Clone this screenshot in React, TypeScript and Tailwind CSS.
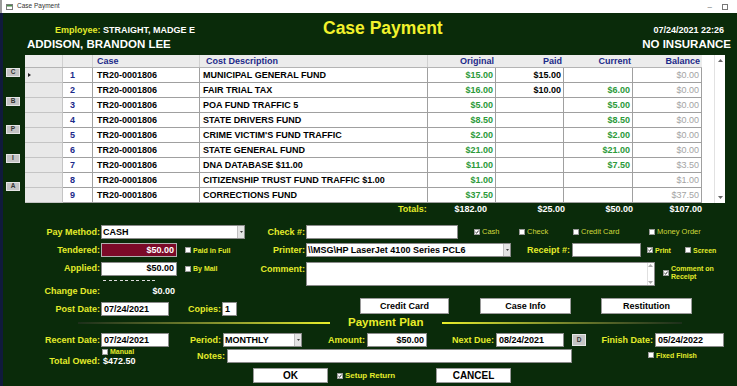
import React from "react"

type Row = {
  n: number
  desc: string
  orig: string
  paid: string
  cur: string
  bal: string
}

const rows: Row[] = [
  { n: 1, desc: "MUNICIPAL GENERAL FUND", orig: "$15.00", paid: "$15.00", cur: "", bal: "$0.00" },
  { n: 2, desc: "FAIR TRIAL TAX", orig: "$16.00", paid: "$10.00", cur: "$6.00", bal: "$0.00" },
  { n: 3, desc: "POA FUND TRAFFIC 5", orig: "$5.00", paid: "", cur: "$5.00", bal: "$0.00" },
  { n: 4, desc: "STATE DRIVERS FUND", orig: "$8.50", paid: "", cur: "$8.50", bal: "$0.00" },
  { n: 5, desc: "CRIME VICTIM'S FUND TRAFFIC", orig: "$2.00", paid: "", cur: "$2.00", bal: "$0.00" },
  { n: 6, desc: "STATE GENERAL FUND", orig: "$21.00", paid: "", cur: "$21.00", bal: "$0.00" },
  { n: 7, desc: "DNA DATABASE $11.00", orig: "$11.00", paid: "", cur: "$7.50", bal: "$3.50" },
  { n: 8, desc: "CITIZENSHIP TRUST FUND TRAFFIC $1.00", orig: "$1.00", paid: "", cur: "", bal: "$1.00" },
  { n: 9, desc: "CORRECTIONS FUND", orig: "$37.50", paid: "", cur: "", bal: "$37.50" },
]

const label =
  "flex h-[14px] items-center justify-end pr-[1px] text-[9px] font-bold leading-none text-[#e3ec2a] whitespace-nowrap"
const input =
  "flex h-[14px] items-center border border-[#8a8a8a] bg-white px-[2px] text-[9px] font-bold leading-none text-black whitespace-nowrap"
const button =
  "flex items-center justify-center border border-[#9a9a9a] bg-white text-[9px] font-bold leading-none text-black"

const Box = ({ checked }: { checked?: boolean }) => (
  <span className="flex h-[6px] w-[6px] shrink-0 items-center justify-center border border-[#9a9a9a] bg-white">
    {checked && (
      <svg viewBox="0 0 4 4" className="h-[4px] w-[4px]">
        <path d="M0.4 2 L1.6 3.2 L3.6 0.6" fill="none" stroke="#1a1a1a" strokeWidth="0.9" />
      </svg>
    )}
  </span>
)

const Check = ({
  text,
  checked,
  className = "",
  light,
}: {
  text: string
  checked?: boolean
  className?: string
  light?: boolean
}) => (
  <div className={`flex items-center gap-[2px] ${className}`}>
    <Box checked={checked} />
    <span
      className={
        light
          ? "text-[7.5px] leading-none text-[#cfd83a] whitespace-nowrap"
          : "text-[7px] font-bold leading-none text-[#e3ec2a] whitespace-nowrap"
      }
    >
      {text}
    </span>
  </div>
)

const Select = ({ value, className = "" }: { value: string; className?: string }) => (
  <div className={`flex h-[14px] border border-[#8a8a8a] bg-white ${className}`}>
    <span className="flex flex-1 items-center overflow-hidden pl-[1px] text-[9px] font-bold leading-none whitespace-nowrap">
      {value}
    </span>
    <span className="flex w-[7px] items-center justify-center border-l border-[#c0c0c0] bg-[#e4e4e4]">
      <svg width="3" height="2" viewBox="0 0 3 2">
        <path d="M0 0H3L1.5 2Z" fill="#444" />
      </svg>
    </span>
  </div>
)

const SideButton = ({ letter }: { letter: string }) => (
  <div className="flex h-[9px] w-[14px] items-center justify-center border border-[#e6e6e6] bg-[#c4c4c4] text-[6.5px] font-bold leading-none text-[#333]">
    {letter}
  </div>
)

const TitleBar = () => (
  <div className="flex h-[13px] items-center border-l-2 border-[#9a9a9a] bg-white">
    <svg width="7" height="6" viewBox="0 0 7 6" className="ml-[4px]">
      <rect x="0.5" y="0.5" width="6" height="5" fill="#fff" stroke="#7a7a7a" />
      <rect x="1" y="1" width="5" height="1.5" fill="#4a8a4a" />
    </svg>
    <span className="ml-[4px] text-[6.5px] leading-none text-[#333]">Case Payment</span>
    <span className="ml-auto text-[8px] leading-none text-[#666]">–</span>
    <span className="mr-[9px] ml-[10px] h-[6px] w-[6px] border border-[#777]" />
  </div>
)

const Table = () => (
  <div className="flex h-[148px]">
    <div className="flex w-[22px] flex-col gap-[19.5px] pt-[13px] pl-[3px]">
      {["C", "B", "P", "I", "A"].map((l) => (
        <SideButton key={l} letter={l} />
      ))}
    </div>
    <div className="flex w-[700px] bg-white">
      <div className="w-[677px] text-[9px] leading-none font-bold">
        <div className="flex h-[13px] border-b border-[#b4b4b4] bg-[#ececec] text-[#1c2a8a]">
          <div className="w-[38px] border-r border-[#d0d0d0]" />
          <div className="w-[30px] border-r border-[#d0d0d0]" />
          <div className="flex w-[107px] items-center border-r border-[#d0d0d0] pl-[4px]">Case</div>
          <div className="flex w-[228px] items-center border-r border-[#d0d0d0] pl-[6px]">Cost Description</div>
          <div className="flex w-[68px] items-center justify-end pr-[2px]">Original</div>
          <div className="flex w-[68px] items-center justify-end pr-[2px]">Paid</div>
          <div className="flex w-[69px] items-center justify-end pr-[2px]">Current</div>
          <div className="flex w-[69px] items-center justify-end pr-[2px]">Balance</div>
        </div>
        {rows.map((r) => (
          <div key={r.n} className="flex h-[15px]">
            <div className="flex w-[38px] items-center border-r border-b border-[#c4c4c4] bg-[#e8e8e8] pl-[3px]">
              {r.n === 1 && (
                <svg width="3" height="4" viewBox="0 0 3 4">
                  <path d="M0 0L3 2L0 4Z" fill="#222" />
                </svg>
              )}
            </div>
            <div className="flex w-[30px] items-center border-r border-b border-[#a0a0a0] pl-[7px] text-[#1c2a8a]">
              {r.n}
            </div>
            <div className="flex w-[107px] items-center border-r border-b border-[#a0a0a0] pl-[4px] text-black">
              TR20-0001806
            </div>
            <div className="flex w-[228px] items-center border-r border-b border-[#a0a0a0] pl-[3px] text-black whitespace-nowrap">
              {r.desc}
            </div>
            <div className="flex w-[68px] items-center justify-end border-r border-b border-[#a0a0a0] pr-[2px] text-[#2c9a3a]">
              {r.orig}
            </div>
            <div className="flex w-[68px] items-center justify-end border-r border-b border-[#a0a0a0] pr-[2px] text-black">
              {r.paid}
            </div>
            <div className="flex w-[69px] items-center justify-end border-r border-b border-[#a0a0a0] pr-[2px] text-[#2c9a3a]">
              {r.cur}
            </div>
            <div className="flex w-[69px] items-center justify-end border-r border-b border-[#a0a0a0] pr-[2px] font-normal text-[#a4a4a4]">
              {r.bal}
            </div>
          </div>
        ))}
      </div>
      <div className="ml-auto flex w-[11px] flex-col justify-between border-l border-[#e2e2e2] py-[1px]">
        <div className="flex h-[9px] items-center justify-center">
          <svg width="5" height="3" viewBox="0 0 5 3">
            <path d="M0 3L2.5 0L5 3Z" fill="#666" />
          </svg>
        </div>
        <div className="flex h-[9px] items-center justify-center">
          <svg width="5" height="3" viewBox="0 0 5 3">
            <path d="M0 0L2.5 3L5 0Z" fill="#666" />
          </svg>
        </div>
      </div>
    </div>
  </div>
)

export default function App() {
  return (
    <div className="flex h-[386px] w-[737px] flex-col overflow-hidden bg-white font-['Liberation_Sans',Arial,sans-serif]">
      <TitleBar />
      <div className="flex flex-1">
        <div className="w-[3px] bg-[#101a3c]" />
        <div className="flex w-[734px] flex-col bg-[#0a2b0a]">
          {/* header */}
          <div className="flex h-[42px]">
            <div className="w-[320px]">
              <div className="pt-[12px] pl-[52px] text-[9px] leading-[10px] font-bold">
                <span className="text-[#e3ec2a]">Employee:</span>{" "}
                <span className="text-white">STRAIGHT, MADGE E</span>
              </div>
              <div className="mt-[3px] pl-[24px] text-[11.5px] leading-[13px] font-bold text-white">
                ADDISON, BRANDON LEE
              </div>
            </div>
            <div className="pt-[5px] text-[17.5px] leading-[20px] font-bold text-[#f2f22c]">Case Payment</div>
            <div className="flex-1 text-right font-bold text-white">
              <div className="pt-[12px] pr-[13px] text-[9px] leading-[10px]">07/24/2021 22:26</div>
              <div className="mt-[3px] pr-[6px] text-[11.5px] leading-[13px]">NO INSURANCE</div>
            </div>
          </div>

          <Table />

          {/* totals */}
          <div className="flex h-[12px] items-center text-[9px] leading-none font-bold text-white">
            <div className="w-[395px]" />
            <div className="w-[30px] text-[#e3ec2a]">Totals:</div>
            <div className="w-[59px] text-right">$182.00</div>
            <div className="w-[78px] text-right">$25.00</div>
            <div className="w-[68px] text-right">$50.00</div>
            <div className="w-[69px] text-right">$107.00</div>
          </div>

          {/* pay method */}
          <div className="mt-[10px] flex h-[14px] items-center">
            <div className={`${label} w-[98px]`}>Pay Method:</div>
            <Select value="CASH" className="w-[144px]" />
            <div className={`${label} w-[61px]`}>Check #:</div>
            <div className={`${input} w-[152px]`} />
            <Check text="Cash" checked light className="ml-[16px] w-[45px]" />
            <Check text="Check" light className="w-[54px]" />
            <Check text="Credit Card" light className="w-[76px]" />
            <Check text="Money Order" light />
          </div>

          {/* tendered */}
          <div className="mt-[4px] flex h-[14px] items-center">
            <div className={`${label} w-[98px]`}>Tendered:</div>
            <div className="flex h-[14px] w-[76px] items-center justify-end border border-[#b0b0b0] bg-[#7b0a28] pr-[2px] text-[9px] leading-none font-bold text-white">
              $50.00
            </div>
            <Check text="Paid in Full" className="ml-[8px] w-[60px]" />
            <div className={`${label} w-[61px]`}>Printer:</div>
            <Select value={"\\\\MSG\\HP LaserJet 4100 Series PCL6"} className="w-[205px]" />
            <div className={`${label} w-[61px] pr-[2px]`}>Receipt #:</div>
            <div className={`${input} w-[69px]`} />
            <Check text="Print" checked className="ml-[6px] w-[38px]" />
            <Check text="Screen" />
          </div>

          {/* applied / comment */}
          <div className="mt-[5px] flex h-[24px] items-start">
            <div className="flex w-[242px] flex-col">
              <div className="flex h-[13px] items-center">
                <div className={`${label} h-[13px] w-[98px]`}>Applied:</div>
                <div className={`${input} h-[13px] w-[76px] justify-end`}>$50.00</div>
                <Check text="By Mail" className="ml-[8px] w-[60px]" />
              </div>
              <div className="mt-[4.5px] ml-[100px] h-[1px] w-[52px] bg-[repeating-linear-gradient(90deg,#dcdcdc_0_3px,transparent_3px_5.5px)]" />
            </div>
            <div className={`${label} h-[13px] w-[61px]`}>Comment:</div>
            <div className="flex h-[24px] w-[349px] justify-end border border-[#8a8a8a] bg-white">
              <div className="flex w-[7px] flex-col justify-between border-l border-[#e0e0e0] py-[1px]">
                <svg width="5" height="3" viewBox="0 0 5 3">
                  <path d="M0 3L2.5 0L5 3Z" fill="#aaa" />
                </svg>
                <svg width="5" height="3" viewBox="0 0 5 3">
                  <path d="M0 0L2.5 3L5 0Z" fill="#aaa" />
                </svg>
              </div>
            </div>
            <div className="mt-[3px] ml-[8px] flex items-center gap-[2px]">
              <Box checked />
              <span className="text-[7px] leading-[8px] font-bold text-[#e3ec2a]">
                Comment on
                <br />
                Receipt
              </span>
            </div>
          </div>

          {/* change due */}
          <div className="flex h-[10px] items-center">
            <div className={`${label} h-[10px] w-[98px]`}>Change Due:</div>
            <div className="w-[76px] pr-[2px] text-right text-[9px] leading-none font-bold text-white">$0.00</div>
          </div>

          {/* post date + buttons */}
          <div className="mt-[2px] flex h-[18px] items-start">
            <div className={`${label} mt-[4px] w-[98px]`}>Post Date:</div>
            <div className={`${input} mt-[4px] w-[68px]`}>07/24/2021</div>
            <div className={`${label} mt-[4px] w-[53px]`}>Copies:</div>
            <div className={`${input} mt-[4px] w-[15px]`}>1</div>
            <div className={`${button} ml-[123px] h-[16px] w-[89px]`}>Credit Card</div>
            <div className={`${button} ml-[31px] h-[16px] w-[91px]`}>Case Info</div>
            <div className={`${button} ml-[30px] h-[16px] w-[91px]`}>Restitution</div>
          </div>

          {/* payment plan divider */}
          <div className="flex h-[14px] items-center">
            <div className="ml-[75px] h-[2px] w-[252px] bg-linear-to-r from-[#1c2f1a] to-[#e8ee2a]" />
            <div className="ml-[18px] text-[11.5px] leading-none font-bold text-[#e8ee2a]">Payment Plan</div>
            <div className="ml-[19px] h-[2px] w-[240px] bg-linear-to-r from-[#e8ee2a] to-[#1c2f1a]" />
          </div>

          {/* plan fields */}
          <div className="mt-[3px] flex h-[14px] items-center">
            <div className={`${label} w-[98px]`}>Recent Date:</div>
            <div className={`${input} w-[68px]`}>07/24/2021</div>
            <div className={`${label} w-[54px] pr-[2px]`}>Period:</div>
            <Select value="MONTHLY" className="w-[79px]" />
            <div className={`${label} w-[65px] pr-[2px]`}>Amount:</div>
            <div className={`${input} w-[60px] justify-end`}>$50.00</div>
            <div className={`${label} w-[69px] pr-[2px]`}>Next Due:</div>
            <div className={`${input} w-[68px]`}>08/24/2021</div>
            <div className="ml-[8px] flex h-[12px] w-[14px] items-center justify-center border border-[#e6e6e6] bg-[#c4c4c4] text-[6.5px] leading-none font-bold text-[#333]">
              D
            </div>
            <div className={`${label} w-[69px] pr-[2px]`}>Finish Date:</div>
            <div className={`${input} w-[69px]`}>05/24/2022</div>
          </div>

          <div className="flex h-[19px] items-start">
            <div className="flex w-[174px] flex-col">
              <div className="flex h-[9px] items-center pl-[99px]">
                <Check text="Manual" />
              </div>
              <div className="flex h-[10px] items-center">
                <div className={`${label} h-[10px] w-[98px]`}>Total Owed:</div>
                <div className="ml-[2px] text-[9px] leading-none font-bold text-white">$472.50</div>
              </div>
            </div>
            <div className={`${label} mt-[2px] w-[50px] pr-[2px]`}>Notes:</div>
            <div className={`${input} mt-[2px] w-[345px]`} />
            <div className="mt-[3px] ml-[76px] flex h-[10px] items-center">
              <Check text="Fixed Finish" />
            </div>
          </div>

          {/* actions */}
          <div className="mt-[2px] flex h-[15px] items-center">
            <div className={`${button} ml-[250px] h-[15px] w-[75px] text-[10px]`}>OK</div>
            <div className="ml-[9px] flex w-[99px] items-center gap-[2px]">
              <Box checked />
              <span className="text-[8px] leading-none font-bold text-[#e3ec2a]">Setup Return</span>
            </div>
            <div className={`${button} h-[15px] w-[75px] text-[10px]`}>CANCEL</div>
          </div>
        </div>
      </div>
    </div>
  )
}
